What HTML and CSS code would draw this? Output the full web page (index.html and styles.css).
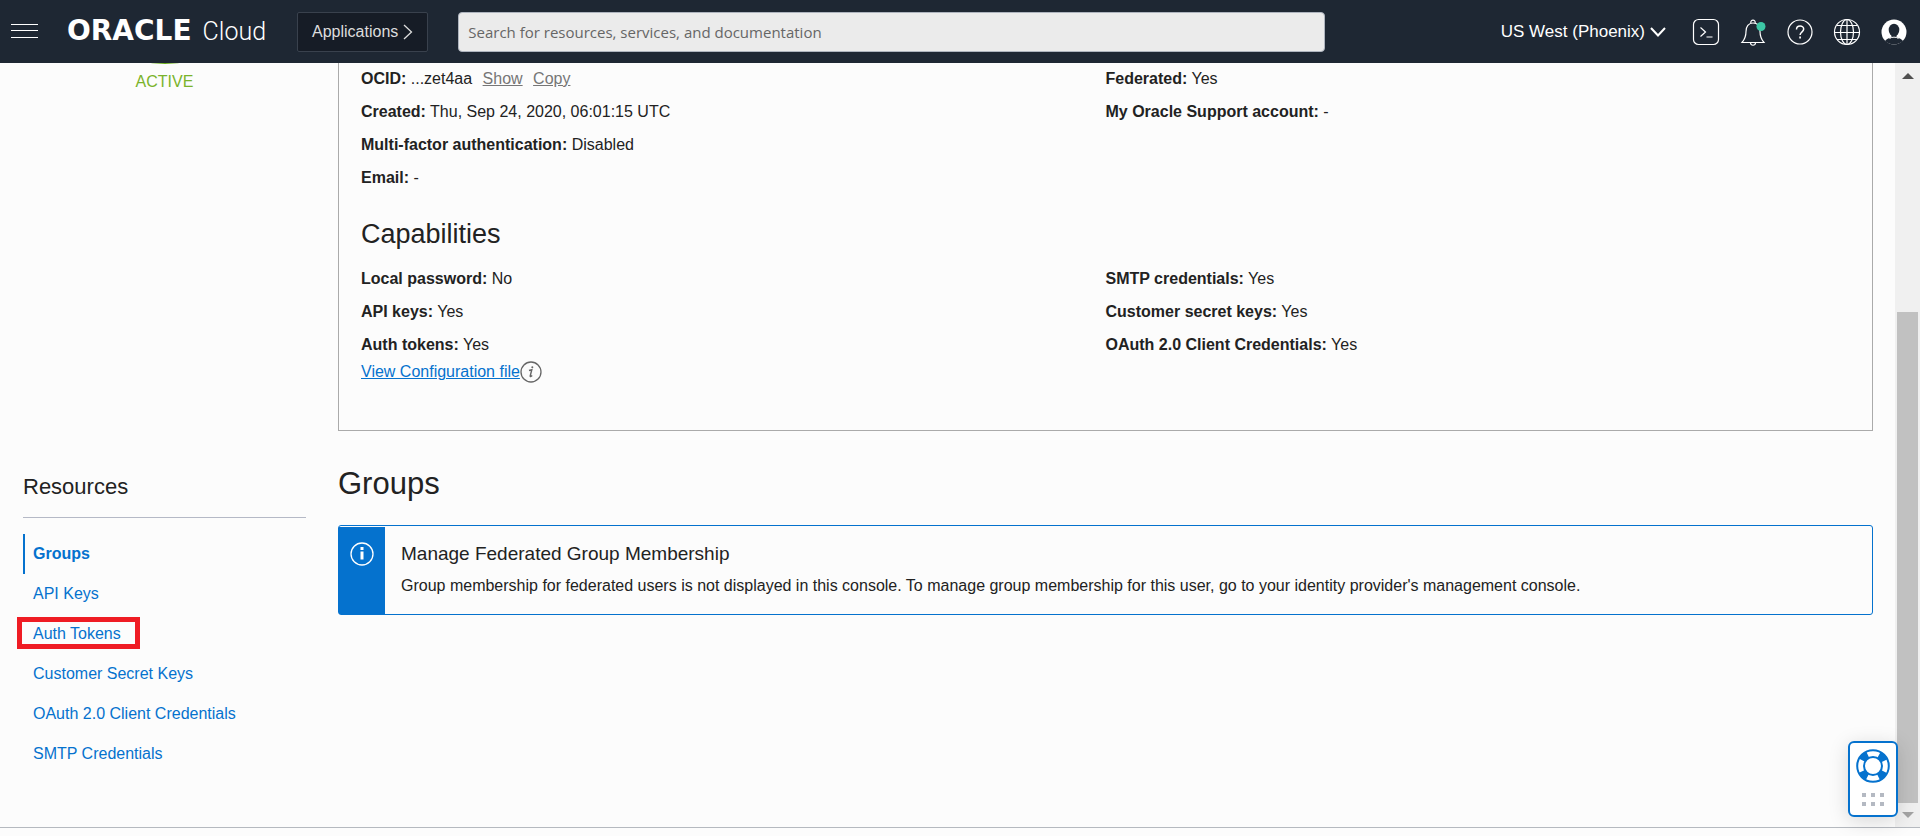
FILE: index.html
```html
<!DOCTYPE html>
<html lang="en">
<head>
  <meta charset="UTF-8">
  <title>Oracle Cloud Infrastructure</title>
  <link rel="stylesheet" href="styles.css">
</head>
<body>
  <header class="topbar">
    <button class="icon-btn menu-btn" aria-label="Menu">
      <svg width="28" height="16" viewBox="0 0 28 16" stroke="#fff" stroke-width="1"><path d="M0 .5h27M0 6.500h27M0 13.500h27"/></svg>
    </button>
    <a class="brand" href="#"><span class="brand-name">ORACLE</span><span class="brand-sub">Cloud</span></a>
    <button class="apps-btn">Applications
      <svg width="10" height="16" viewBox="0 0 10 16" fill="none" stroke="#ddd" stroke-width="1.3"><path d="M1 1l7.500 7L1 15"/></svg>
    </button>
    <input class="search" type="text" placeholder="Search for resources, services, and documentation" aria-label="Search">
    <button class="region-btn">US West (Phoenix)
      <svg width="16" height="10" viewBox="0 0 16 10" fill="none" stroke="#fff" stroke-width="2"><path d="M1 1l7 7.500L15 1"/></svg>
    </button>
    <nav class="tools">
      <button class="icon-btn" aria-label="Cloud Shell">
        <svg width="28" height="28" viewBox="0 0 28 28" fill="none" stroke="#fff" stroke-width="1.2"><rect x="1.500" y="1.500" width="25" height="25" rx="5"/><path d="M8.500 9.500l5 4.500-5 4.500M14.500 19h6"/></svg>
      </button>
      <button class="icon-btn" aria-label="Notifications">
        <svg width="28" height="28" viewBox="0 0 28 28" fill="none" stroke="#fff" stroke-width="1.2"><path d="M3 24.500c3-3.500 4-6 4-11 0-5 2.500-8.500 7-8.500s7 3.500 7 8.500c0 5 1 7.500 4 11zM11.800 5c-.6-3.800 5-3.800 4.400 0M11.500 25c.3 3 4.700 3 5 0"/><circle cx="22" cy="8.500" r="4.500" fill="#3cc7a5" stroke="none"/></svg>
      </button>
      <button class="icon-btn" aria-label="Help">
        <svg width="28" height="28" viewBox="0 0 28 28" fill="none" stroke="#fff" stroke-width="1.2"><circle cx="14" cy="14" r="12"/><path d="M10.500 11.500c0-4.800 7.200-4.500 7.200-.4 0 2.700-3.600 2.800-3.600 6" stroke-width="1.500"/><path d="M14.100 18.500v2" stroke-width="1.700"/></svg>
      </button>
      <button class="icon-btn" aria-label="Language">
        <svg width="28" height="28" viewBox="0 0 28 28" fill="none" stroke="#fff" stroke-width="1.200"><circle cx="14" cy="14" r="12.500"/><ellipse cx="14" cy="14" rx="6.500" ry="12.500"/><path d="M14 1.500v25M1.500 14.500h25M4 7.500h20M4 21.500h20"/></svg>
      </button>
      <button class="icon-btn" aria-label="Profile">
        <svg width="28" height="28" viewBox="0 0 28 28"><circle cx="14" cy="14" r="12.500" fill="#fff"/><ellipse cx="14" cy="12" rx="5.300" ry="6.300" fill="#1e2733"/><path d="M11.500 17h5v2.500c3 .6 5 1.500 6.500 3.500-5 4.500-13 4.500-18 0 1.500-2 3.500-2.900 6.500-3.500z" fill="#1e2733"/><path d="M9.500 20.500c2.500-1.800 6.500-1.800 9 0" fill="none" stroke="#fff"/></svg>
      </button>
    </nav>
  </header>

  <div class="viewport">
    <main class="page">
      <section class="status">
        <div class="status-circle"></div>
        <p class="status-text">ACTIVE</p>
      </section>

      <section class="card">
        <div class="details">
          <ul class="fields">
            <li><b>OCID:</b> ...zet4aa <a class="action" href="#">Show</a> <a class="action" href="#">Copy</a></li>
            <li><b>Created:</b> Thu, Sep 24, 2020, 06:01:15 UTC</li>
            <li><b>Multi-factor authentication:</b> Disabled</li>
            <li><b>Email:</b> -</li>
          </ul>
          <ul class="fields">
            <li><b>Federated:</b> Yes</li>
            <li><b>My Oracle Support account:</b> -</li>
          </ul>
        </div>
        <h3>Capabilities</h3>
        <div class="details">
          <ul class="fields">
            <li><b>Local password:</b> No</li>
            <li><b>API keys:</b> Yes</li>
            <li><b>Auth tokens:</b> Yes</li>
          </ul>
          <ul class="fields">
            <li><b>SMTP credentials:</b> Yes</li>
            <li><b>Customer secret keys:</b> Yes</li>
            <li><b>OAuth 2.0 Client Credentials:</b> Yes</li>
          </ul>
        </div>
        <div class="config">
          <a href="#">View Configuration file</a>
          <svg width="22" height="22" viewBox="0 0 22 22" fill="none" stroke="#666"><circle cx="11" cy="11" r="10" stroke-width="1.300"/><path d="M9 9.500l2.800-.8-1.600 6.300c-.1.700.8.700 2-.4" stroke-width="1.400"/><circle cx="12.300" cy="6.200" r="1" fill="#666" stroke="none"/></svg>
        </div>
      </section>

      <aside class="resources">
        <h4>Resources</h4>
        <ul class="resource-list">
          <li class="selected"><a href="#">Groups</a></li>
          <li><a href="#">API Keys</a></li>
          <li><a class="marked" href="#">Auth Tokens</a></li>
          <li><a href="#">Customer Secret Keys</a></li>
          <li><a href="#">OAuth 2.0 Client Credentials</a></li>
          <li><a href="#">SMTP Credentials</a></li>
        </ul>
      </aside>

      <section class="groups">
        <h2>Groups</h2>
        <div class="notice">
          <div class="notice-icon">
            <svg width="24" height="24" viewBox="0 0 24 24" fill="none" stroke="#fff"><circle cx="12" cy="12" r="11" stroke-width="1.300"/><path d="M12 5v3M12 9.500v8" stroke-width="3"/></svg>
          </div>
          <div class="notice-body">
            <h5>Manage Federated Group Membership</h5>
            <p>Group membership for federated users is not displayed in this console. To manage group membership for this user, go to your identity provider's management console.</p>
          </div>
        </div>
      </section>
    </main>

    <div class="scrollbar">
      <span class="arrow-up"></span>
      <div class="thumb"></div>
      <span class="arrow-down"></span>
    </div>
  </div>
  <footer></footer>

  <button class="help-widget" aria-label="Support">
    <svg width="34" height="34" viewBox="0 0 34 34" fill="none" stroke="#0572ce"><circle cx="17" cy="17" r="12.500" stroke-width="7" stroke-dasharray="8 11.635" stroke-dashoffset="-5.800"/><circle cx="17" cy="17" r="15.800" stroke-width="2"/><circle cx="17" cy="17" r="9" stroke-width="2"/></svg>
    <svg width="24" height="14" viewBox="0 0 24 14" fill="#b4b9c2"><path d="M1 0h4v4H1zM10 0h4v4h-4zM19 0h4v4h-4zM1 9h4v4H1zM10 9h4v4h-4zM19 9h4v4h-4z"/></svg>
  </button>
</body>
</html>
```
FILE: styles.css
```css
* {
  box-sizing: border-box;
}

body {
  margin: 0;
  min-height: 100vh;
  display: flex;
  flex-direction: column;
  background: #fcfcfc;
  color: #222;
  font-family: "Liberation Sans", Arial, sans-serif;
  font-size: 16px;
  line-height: 20px;
}

h2, h3, h4, h5, p, ul {
  margin: 0;
  padding: 0;
  font-weight: normal;
}

ul {
  list-style: none;
}

a {
  color: #0572ce;
}

button {
  font-family: inherit;
  font-size: 16px;
  cursor: pointer;
}

svg {
  display: block;
}

/* top bar */
.topbar {
  display: flex;
  align-items: center;
  height: 63px;
  padding: 0 12px 0 11px;
  background: #1e2733;
  position: relative;
  z-index: 1;
}

.icon-btn {
  padding: 0;
  border: none;
  background: none;
}

.brand {
  display: flex;
  align-items: baseline;
  gap: 11px;
  width: 230px;
  margin-left: 28px;
  color: #fff;
  text-decoration: none;
}

.brand-name {
  font-family: "DejaVu Sans", sans-serif;
  font-size: 28px;
  font-weight: bold;
}

.brand-sub {
  font-family: Roboto, sans-serif;
  font-size: 25px;
  font-weight: 300;
}

.apps-btn {
  display: flex;
  align-items: center;
  gap: 5px;
  height: 40px;
  padding: 0 14px;
  border: 1px solid #39414d;
  border-radius: 2px;
  background: #161c26;
  color: #ddd;
}

.search {
  flex: 1;
  min-width: 100px;
  height: 40px;
  margin: 0 176px 0 30px;
  padding: 0 9px;
  border: 1px solid #aeb4be;
  border-radius: 4px;
  background: #ebebeb;
  font-family: "Open Sans", sans-serif;
  font-size: 15px;
}

.search::placeholder {
  color: #666;
}

.region-btn {
  display: flex;
  align-items: center;
  gap: 5px;
  padding: 0;
  border: none;
  background: none;
  color: #fff;
  font-size: 17px;
  white-space: nowrap;
}

.tools {
  display: flex;
  gap: 19px;
  margin-left: 26px;
}

/* page */
.viewport {
  flex: 1;
  display: flex;
}

.page {
  flex: 1;
  display: grid;
  grid-template-columns: 283px 1fr;
  grid-template-rows: auto 1fr;
  column-gap: 32px;
  padding: 0 22px 0 23px;
}

.status {
  text-align: center;
  color: #7ab32b;
}

.status-circle {
  width: 256px;
  height: 256px;
  margin: -255px auto 0;
  border-radius: 50%;
  background: #6cae1b;
}

.status-text {
  margin-top: 8px;
}

.card {
  margin-top: -1px;
  padding: 0 22px 47px;
  border: 1px solid #aaa;
  border-top: none;
}

.details {
  display: grid;
  grid-template-columns: 1fr 1fr;
}

.fields li {
  line-height: 33px;
}

.card h3 {
  padding: 22px 0 10px;
  font-size: 27px;
  line-height: 36px;
}

.action {
  margin-left: 6px;
  color: #767676;
}

.config {
  display: flex;
  align-items: center;
}

.resources h4 {
  padding: 42px 0 17px;
  border-bottom: 1px solid #b5b9c6;
  font-size: 22px;
  line-height: 27px;
}

.resource-list {
  margin-top: 16px;
}

.resource-list li {
  padding-left: 10px;
  line-height: 40px;
}

.resource-list a {
  text-decoration: none;
}

.resource-list .selected {
  padding-left: 8px;
  border-left: 2px solid #0572ce;
  font-weight: bold;
}

/* red frame drawn round the link */
.marked {
  position: relative;
}

.marked::after {
  content: "";
  position: absolute;
  top: -8px;
  right: -19px;
  bottom: -7px;
  left: -16px;
  border: 5px solid #ef1c24;
}

.groups h2 {
  padding: 33px 0 21px;
  font-size: 31px;
  line-height: 40px;
}

.notice {
  display: flex;
  border: 1px solid #0572ce;
  border-radius: 3px;
}

.notice-icon {
  display: flex;
  justify-content: center;
  width: 46px;
  margin-top: 1px;
  padding-top: 15px;
  background: #0572ce;
}

.notice-body {
  padding: 16px;
}

.notice-body h5 {
  margin-bottom: 8px;
  font-size: 19px;
  line-height: 24px;
}

.notice-body p {
  line-height: 24px;
}

/* scrollbar */
.scrollbar {
  display: flex;
  flex-direction: column;
  align-items: center;
  width: 25px;
  padding: 10px 0 9px;
  background: #f0f0f0;
}

.arrow-up,
.arrow-down {
  border: 6px solid transparent;
  border-top: none;
  border-bottom-color: #505050;
}

.arrow-down {
  margin-top: 9px;
  border-top: 6px solid #a3a3a3;
  border-bottom: none;
}

.thumb {
  width: 21px;
  height: 491px;
  margin-top: auto;
  background: #c1c1c1;
}

footer {
  height: 9px;
  border-top: 1px solid #b5b9bf;
}

.help-widget {
  position: fixed;
  right: 22px;
  bottom: 19px;
  display: flex;
  flex-direction: column;
  align-items: center;
  gap: 10px;
  width: 50px;
  height: 76px;
  padding: 6px 0 0;
  border: 2px solid #0572ce;
  border-radius: 6px;
  background: #fff;
  box-shadow: 0 4px 20px rgba(0, 0, 0, 0.15);
}
```
